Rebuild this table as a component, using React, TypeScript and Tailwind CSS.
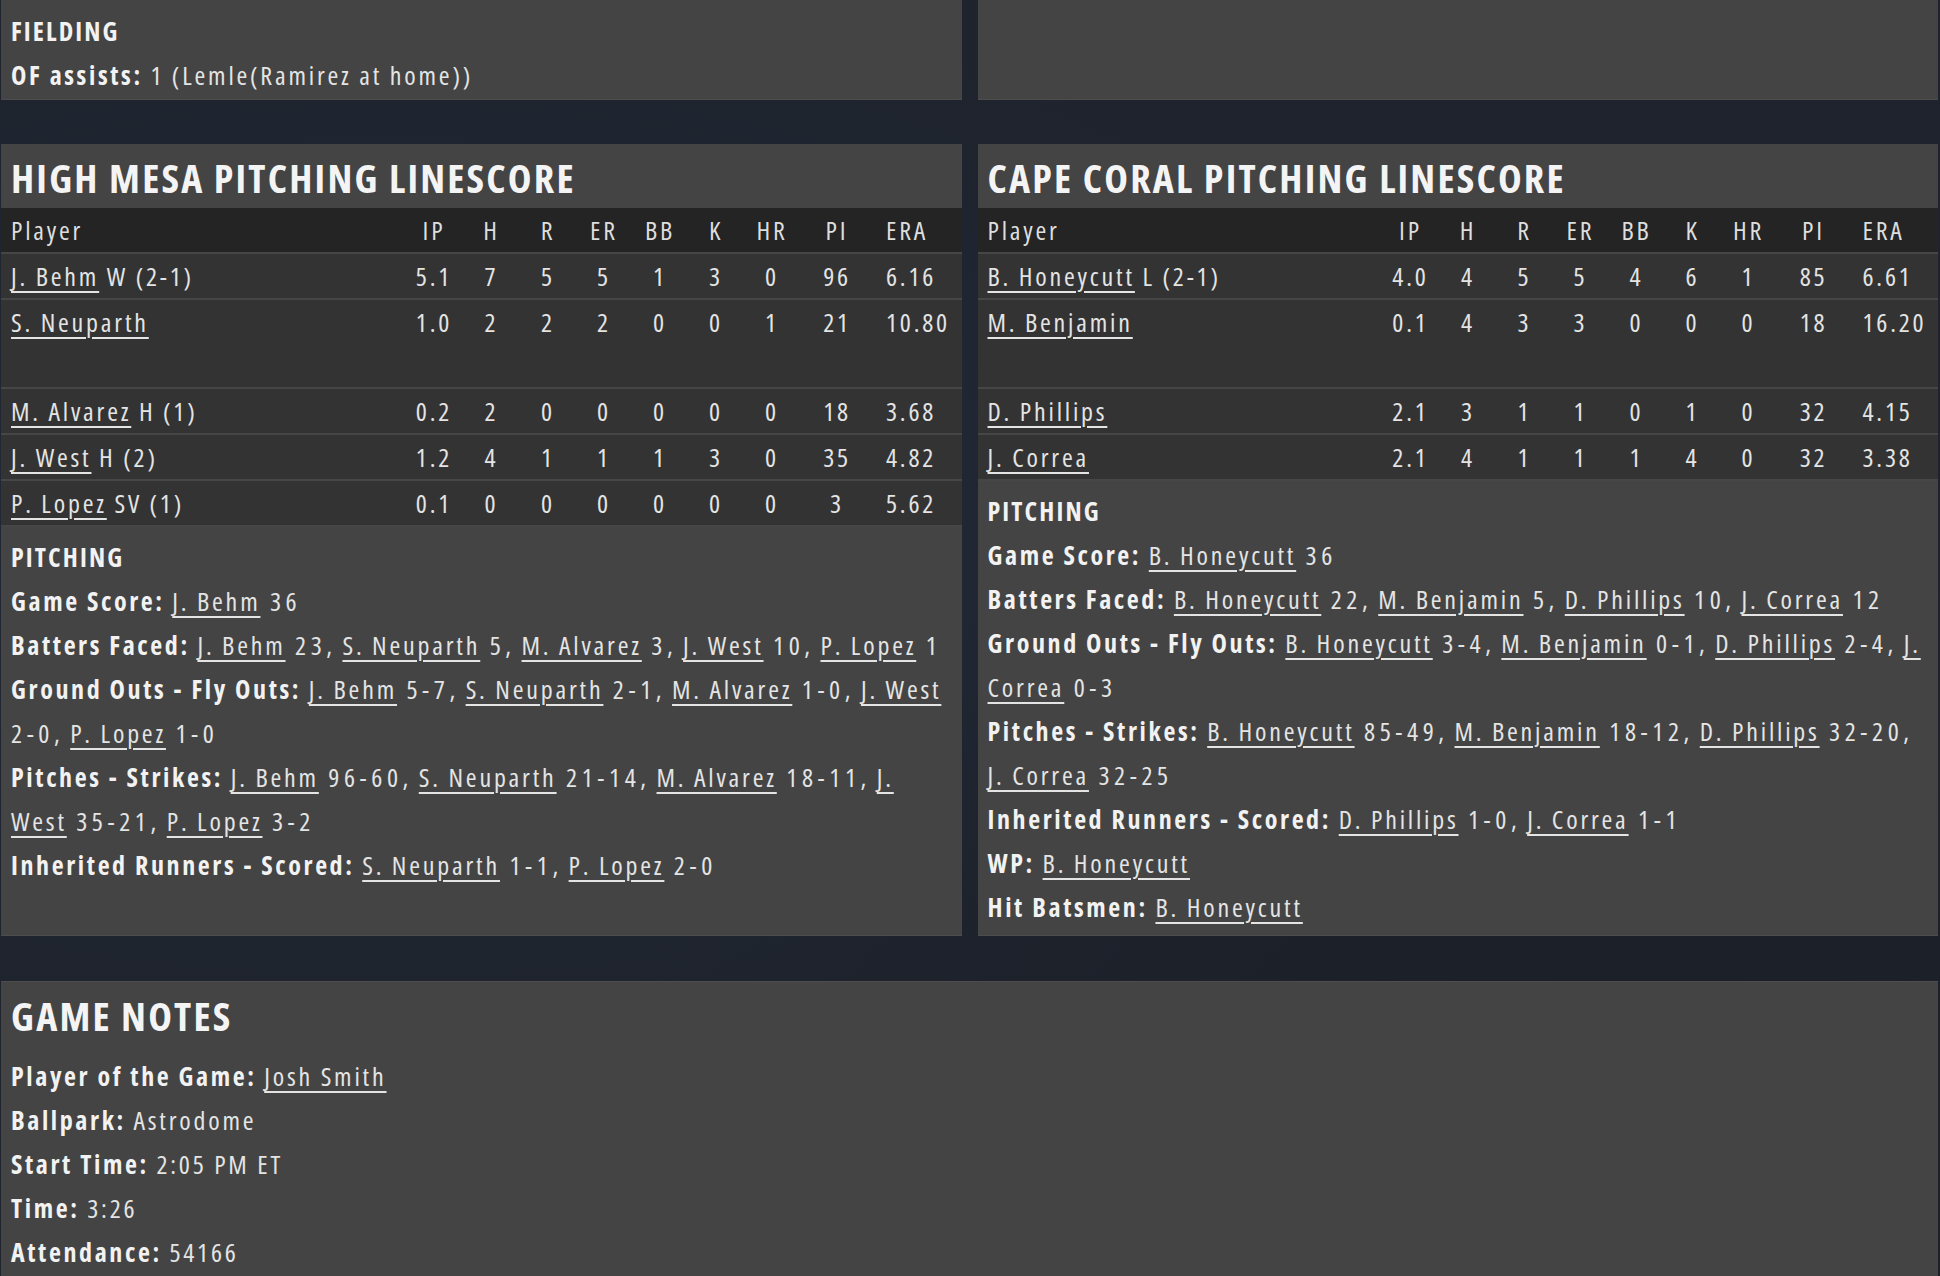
type Pitcher = {
  name: string;
  note?: string;
  line: string[];
};

type Stat = { label: string; items: [string, string][] };

const highMesa: (Pitcher | null)[] = [
  { name: 'J. Behm', note: 'W (2-1)', line: ['5.1', '7', '5', '5', '1', '3', '0', '96', '6.16'] },
  { name: 'S. Neuparth', line: ['1.0', '2', '2', '2', '0', '0', '1', '21', '10.80'] },
  null,
  { name: 'M. Alvarez', note: 'H (1)', line: ['0.2', '2', '0', '0', '0', '0', '0', '18', '3.68'] },
  { name: 'J. West', note: 'H (2)', line: ['1.2', '4', '1', '1', '1', '3', '0', '35', '4.82'] },
  { name: 'P. Lopez', note: 'SV (1)', line: ['0.1', '0', '0', '0', '0', '0', '0', '3', '5.62'] },
];

const capeCoral: (Pitcher | null)[] = [
  { name: 'B. Honeycutt', note: 'L (2-1)', line: ['4.0', '4', '5', '5', '4', '6', '1', '85', '6.61'] },
  { name: 'M. Benjamin', line: ['0.1', '4', '3', '3', '0', '0', '0', '18', '16.20'] },
  null,
  { name: 'D. Phillips', line: ['2.1', '3', '1', '1', '0', '1', '0', '32', '4.15'] },
  { name: 'J. Correa', line: ['2.1', '4', '1', '1', '1', '4', '0', '32', '3.38'] },
];

const highMesaStats: Stat[] = [
  { label: 'Game Score:', items: [['J. Behm', '36']] },
  {
    label: 'Batters Faced:',
    items: [['J. Behm', '23'], ['S. Neuparth', '5'], ['M. Alvarez', '3'], ['J. West', '10'], ['P. Lopez', '1']],
  },
  {
    label: 'Ground Outs - Fly Outs:',
    items: [['J. Behm', '5-7'], ['S. Neuparth', '2-1'], ['M. Alvarez', '1-0'], ['J. West', '2-0'], ['P. Lopez', '1-0']],
  },
  {
    label: 'Pitches - Strikes:',
    items: [['J. Behm', '96-60'], ['S. Neuparth', '21-14'], ['M. Alvarez', '18-11'], ['J. West', '35-21'], ['P. Lopez', '3-2']],
  },
  { label: 'Inherited Runners - Scored:', items: [['S. Neuparth', '1-1'], ['P. Lopez', '2-0']] },
];

const capeCoralStats: Stat[] = [
  { label: 'Game Score:', items: [['B. Honeycutt', '36']] },
  {
    label: 'Batters Faced:',
    items: [['B. Honeycutt', '22'], ['M. Benjamin', '5'], ['D. Phillips', '10'], ['J. Correa', '12']],
  },
  {
    label: 'Ground Outs - Fly Outs:',
    items: [['B. Honeycutt', '3-4'], ['M. Benjamin', '0-1'], ['D. Phillips', '2-4'], ['J. Correa', '0-3']],
  },
  {
    label: 'Pitches - Strikes:',
    items: [['B. Honeycutt', '85-49'], ['M. Benjamin', '18-12'], ['D. Phillips', '32-20'], ['J. Correa', '32-25']],
  },
  { label: 'Inherited Runners - Scored:', items: [['D. Phillips', '1-0'], ['J. Correa', '1-1']] },
  { label: 'WP:', items: [['B. Honeycutt', '']] },
  { label: 'Hit Batsmen:', items: [['B. Honeycutt', '']] },
];

const cols = ['IP', 'H', 'R', 'ER', 'BB', 'K', 'HR', 'PI'];
const rowGrid = 'grid grid-cols-[404px_58px_57px_56px_56px_56px_56px_56px_74px_1fr] items-center';

function PlayerLink({ children }: { children: string }) {
  return (
    <span className="underline decoration-[2px] underline-offset-[5px] decoration-[#e4e4e4]">{children}</span>
  );
}

// The whole screen is the condensed cut with open letter spacing
function Title({ children }: { children: string }) {
  return (
    <h2 className="h-16 pt-1 pl-[10px] text-[40px] leading-[60px] font-bold tracking-[2.2px] text-[#f4f4f4]">
      {children}
    </h2>
  );
}

function Heading({ children }: { children: string }) {
  return <p className="leading-[44px] font-bold tracking-[2.1px] text-[#f2f2f2]">{children}</p>;
}

function Line({ label, children }: { label: string; children?: React.ReactNode }) {
  return (
    <p className="leading-[44px]">
      <span className="font-bold tracking-[2.6px] text-[#f2f2f2]">{label}</span> {children}
    </p>
  );
}

function StatLine({ stat }: { stat: Stat }) {
  return (
    <Line label={stat.label}>
      {stat.items.map(([name, val], i) => (
        <span key={name}>
          <PlayerLink>{name}</PlayerLink>
          {val && <span className="tracking-[4.6px]">{' ' + val}</span>}
          {i < stat.items.length - 1 && ', '}
        </span>
      ))}
    </Line>
  );
}

function PitchingPanel({ title, rows, stats }: { title: string; rows: (Pitcher | null)[]; stats: Stat[] }) {
  return (
    <section className="bg-[#444444] border-b border-[#4d4d4d] flex flex-col">
      <Title>{title}</Title>
      <div className={`${rowGrid} h-[46px] bg-[#242424] border-b-2 border-[#464646] text-[#dedede]`}>
        <div className="pl-[10px]">Player</div>
        {cols.map((c) => (
          <div key={c} className="text-center">{c}</div>
        ))}
        <div className="pl-3">ERA</div>
      </div>
      {rows.map((p, i) => {
        if (!p) return <div key={'gap' + i} className="h-[45px] bg-[#333333] border-b-2 border-[#464646]" />;
        const beforeGap = rows[i + 1] === null;
        return (
          <div
            key={p.name}
            className={`${rowGrid} bg-[#333333] ${beforeGap ? 'h-[44px]' : 'h-[46px] border-b-2 border-[#464646]'}`}
          >
            <div className="pl-[10px] whitespace-nowrap">
              <PlayerLink>{p.name}</PlayerLink>
              {p.note && ' ' + p.note}
            </div>
            {p.line.slice(0, 8).map((v, j) => (
              <div key={j} className="text-center">{v}</div>
            ))}
            <div className="pl-3">{p.line[8]}</div>
          </div>
        );
      })}
      <div className="pt-2 pb-[6px] px-[10px]">
        <Heading>PITCHING</Heading>
        {stats.map((s) => (
          <StatLine key={s.label} stat={s} />
        ))}
      </div>
    </section>
  );
}

export default function App() {
  return (
    <div className="min-h-screen w-full flex flex-col overflow-hidden bg-[#1e232d] bg-[radial-gradient(ellipse_at_20%_40%,#222a38_0%,transparent_50%),radial-gradient(ellipse_at_85%_90%,#1b1f27_0%,transparent_45%)] pl-px pr-[2px] font-['Open_Sans',sans-serif] [font-stretch:75%] text-[26px] tracking-[2.8px] text-[#e4e4e4]">
      <div className="grid grid-cols-2 gap-4">
        <section className="h-[100px] bg-[#444444] border-b border-[#4d4d4d] pt-[9px] px-[10px]">
          <Heading>FIELDING</Heading>
          <Line label="OF assists:">1 (Lemle(Ramirez at home))</Line>
        </section>
        <section className="h-[100px] bg-[#444444] border-b border-[#4d4d4d]" />
      </div>

      <div className="mt-11 grid grid-cols-2 gap-4 items-stretch">
        <PitchingPanel title="HIGH MESA PITCHING LINESCORE" rows={highMesa} stats={highMesaStats} />
        <PitchingPanel title="CAPE CORAL PITCHING LINESCORE" rows={capeCoral} stats={capeCoralStats} />
      </div>

      <section className="mt-[45px] flex-1 bg-[#444444] border-t border-[#4d4d4d]">
        <Title>GAME NOTES</Title>
        <div className="pt-2 px-[10px]">
          <Line label="Player of the Game:">
            <PlayerLink>Josh Smith</PlayerLink>
          </Line>
          <Line label="Ballpark:">Astrodome</Line>
          <Line label="Start Time:">2:05 PM ET</Line>
          <Line label="Time:">3:26</Line>
          <Line label="Attendance:">54166</Line>
        </div>
      </section>
    </div>
  );
}
